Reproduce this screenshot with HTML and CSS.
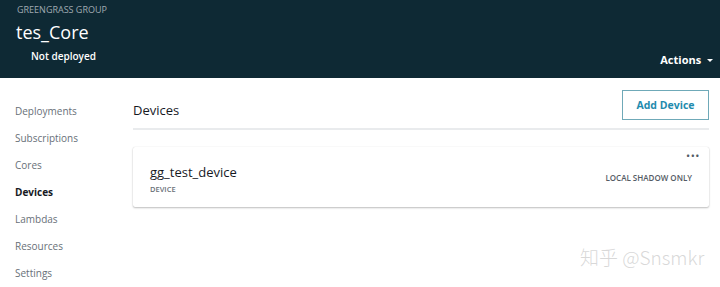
FILE: index.html
```html
<!DOCTYPE html>
<html lang="en">
<head>
    <meta charset="UTF-8">
    <meta name="viewport" content="width=device-width, initial-scale=1.0">
    <title>tes_Core - Devices</title>
    <link rel="stylesheet" href="styles.css">
</head>
<body>
    <div class="header">
        <div class="header-info">
            <p class="kicker">GREENGRASS GROUP</p>
            <h1>tes_Core</h1>
            <p class="status">Not deployed</p>
        </div>
        <div class="actions">Actions <span class="caret"></span></div>
    </div>

    <div class="main">
        <ul class="sidebar">
            <li>Deployments</li>
            <li>Subscriptions</li>
            <li>Cores</li>
            <li class="active">Devices</li>
            <li>Lambdas</li>
            <li>Resources</li>
            <li>Settings</li>
        </ul>

        <div class="content">
            <div class="content-head">
                <h2>Devices</h2>
                <button class="btn">Add Device</button>
            </div>

            <div class="card">
                <div class="card-info">
                    <div class="device-name">gg_test_device</div>
                    <div class="device-type">DEVICE</div>
                </div>
                <div class="card-side">
                    <span class="more">&bull;&bull;&bull;</span>
                    <span class="shadow-tag">LOCAL SHADOW ONLY</span>
                </div>
            </div>
        </div>
    </div>

    <div class="watermark">知乎 @Snsmkr</div>
</body>
</html>
```

FILE: styles.css
```css
body {
    font-family: "Open Sans", Arial, sans-serif;
    margin: 0;
    padding: 0;
    background-color: #fff;
    color: #16191f;
}
.header {
    display: flex;
    justify-content: space-between;
    align-items: flex-end;
    height: 78px;
    box-sizing: border-box;
    padding: 0 7px 11px 16px;
    background-color: #0e2934;
    color: #fff;
}
.header-info {
    align-self: flex-start;
}
.kicker {
    margin: 3px 0 0 1px;
    font-size: 9px;
    color: #a0aab2;
}
.header h1 {
    margin: 3px 0 0;
    font-size: 18px;
    font-weight: normal;
    line-height: 26px;
}
.status {
    margin: 4px 0 0 15px;
    font-size: 10px;
    font-weight: 600;
}
.actions {
    font-size: 11px;
    font-weight: bold;
}
.caret {
    display: inline-block;
    width: 0;
    height: 0;
    margin-left: 3px;
    vertical-align: 2px;
    border-left: 3px solid transparent;
    border-right: 3px solid transparent;
    border-top: 3px solid #fff;
}
.main {
    display: flex;
}
.sidebar {
    list-style: none;
    margin: 0;
    padding: 26px 0 0 15px;
    width: 118px;
}
.sidebar li {
    font-size: 10px;
    line-height: 14px;
    margin-bottom: 13px;
    color: #687078;
}
.sidebar li.active {
    color: #16191f;
    font-weight: bold;
}
.content {
    flex: 1;
    padding: 12px 11px 0 0;
}
.content-head {
    display: flex;
    justify-content: space-between;
    align-items: center;
    padding-bottom: 8px;
    border-bottom: 2px solid #e9ebed;
}
.content-head h2 {
    margin: 9px 0 0;
    font-size: 13px;
    font-weight: normal;
}
.btn {
    padding: 0;
    width: 87px;
    height: 30px;
    background-color: #fff;
    color: #1f8bae;
    border: 1px solid #6fa9b8;
    font-family: inherit;
    font-size: 10.5px;
    font-weight: bold;
}
.card {
    display: flex;
    justify-content: space-between;
    margin-top: 17px;
    padding: 0 9px 0 17px;
    height: 60px;
    border-radius: 2px;
    box-shadow: 0 1px 2px rgba(0, 0, 0, 0.25), 0 0 1px rgba(0, 0, 0, 0.15);
}
.card-info {
    padding-top: 15px;
}
.device-name {
    font-size: 13px;
    line-height: 20px;
}
.device-type {
    margin-top: 2px;
    font-size: 7.5px;
    font-weight: 600;
    color: #687078;
}
.card-side {
    display: flex;
    flex-direction: column;
    align-items: flex-end;
}
.more {
    font-size: 11px;
    line-height: 12px;
    letter-spacing: 0.5px;
    color: #545b64;
    margin-top: 3px;
}
.shadow-tag {
    margin: 10px 8px 0 0;
    font-size: 8px;
    font-weight: 600;
    color: #545b64;
}
.watermark {
    position: absolute;
    left: 580px;
    top: 243px;
    font-family: "Noto Sans CJK SC", sans-serif;
    font-size: 19px;
    font-weight: 300;
    color: rgba(190, 190, 190, 0.6);
}
```
